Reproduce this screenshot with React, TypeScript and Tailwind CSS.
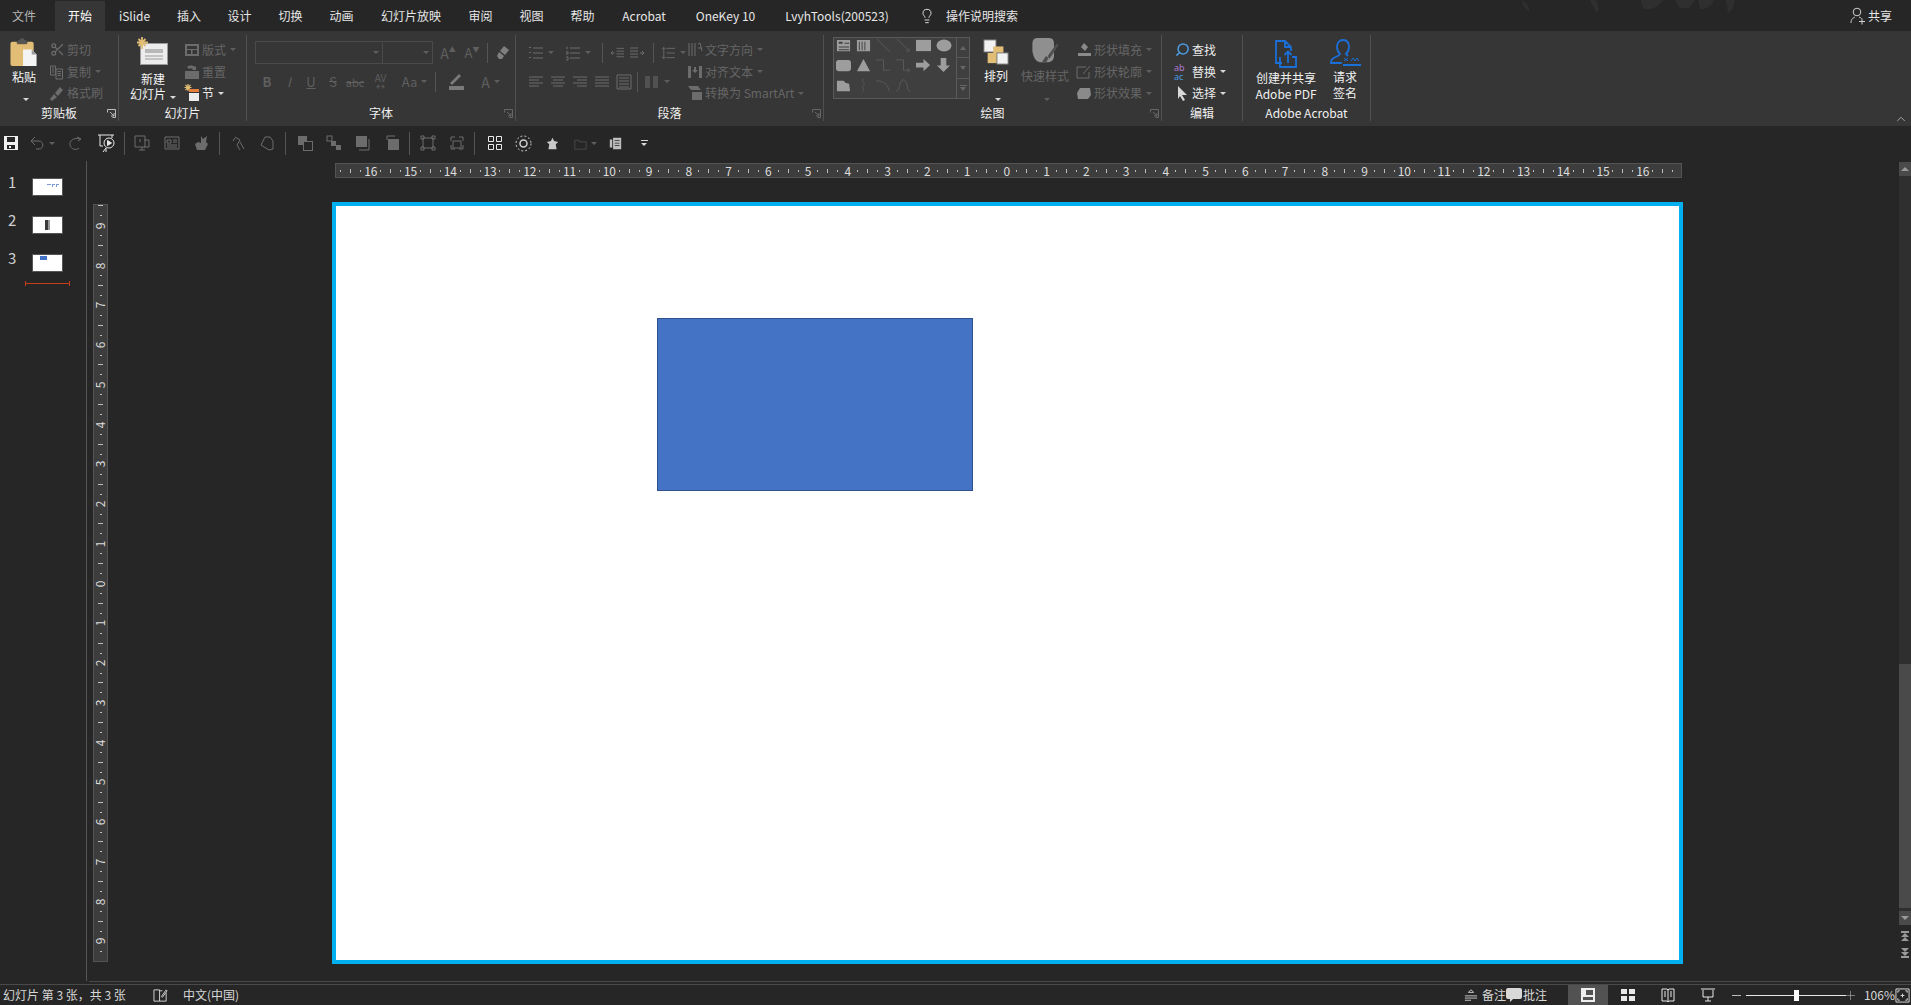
import type { ReactNode } from "react";
import { ChevronUp, Lightbulb, Scissors, Search } from "lucide-react";

const D = "#6c6c6c";

const tabs: [string, number][] = [
  ["开始", 50],
  ["iSlide", 59],
  ["插入", 50],
  ["设计", 51],
  ["切换", 51],
  ["动画", 51],
  ["幻灯片放映", 88],
  ["审阅", 51],
  ["视图", 51],
  ["帮助", 51],
  ["Acrobat", 72],
  ["OneKey 10", 91],
  ["LvyhTools(200523)", 132],
];

const rulerH = Array.from({ length: 135 }, (_, i) => -16.75 + i * 0.25);
const rulerV = Array.from({ length: 76 }, (_, i) => 9.5 - i * 0.25);

function Caret({ off }: { off?: boolean }) {
  return <span className={`ml-[4px] inline-block w-0 h-0 border-x-[3px] border-x-transparent border-t-[3px] ${off ? "border-t-[#5e5e5e]" : "border-t-[#d8d8d8]"}`} />;
}

function Sep({ h = "h-[20px]" }: { h?: string }) {
  return <div className={`w-px ${h} bg-[#555]`} />;
}

function Group({ w, label, launcher, children }: { w: string; label: string; launcher?: boolean; children: ReactNode }) {
  return (
    <div className={`${w} h-[86px] mt-[4px] shrink-0 border-r border-[#505050] flex flex-col`}>
      <div className="flex-1 flex min-h-0">{children}</div>
      <div className="h-[17px] flex items-center justify-center relative text-[#f0f0f0]">
        {label}
        {launcher && (
          <svg className="absolute right-[2px] top-[5px]" width="9" height="9" viewBox="0 0 9 9" fill="none" stroke={label === "剪贴板" ? "#bdbdbd" : "#666"}>
            <path d="M.5 3.5v-3h8v8h-3M3 3l4 4M7 4v3H4" />
          </svg>
        )}
      </div>
    </div>
  );
}

function Cmd({ icon, label, off, caret, w }: { icon: ReactNode; label: string; off?: boolean; caret?: boolean; w?: string }) {
  return (
    <div className={`h-[23px] flex items-center ${w ?? ""} ${off ? "text-[#666]" : "text-[#ececec]"}`}>
      <span className="w-[18px] h-[18px] flex items-center justify-center shrink-0 mr-[1px]">{icon}</span>
      {label}
      {caret && <Caret off={off} />}
    </div>
  );
}

function Ln({ d, s = 16, c = D }: { d: string; s?: number; c?: string }) {
  return (
    <svg width={s} height={s} viewBox="0 0 16 16" fill="none" stroke={c}>
      <path d={d} />
    </svg>
  );
}

function Fl({ d, s = 16, c = D }: { d: string; s?: number; c?: string }) {
  return (
    <svg width={s} height={s} viewBox="0 0 16 16" fill={c}>
      <path d={d} />
    </svg>
  );
}

function FontBtn({ w, children, cls }: { w: string; children: ReactNode; cls?: string }) {
  return <div className={`${w} h-[20px] flex items-center justify-center text-[#5f5f5f] ${cls ?? ""}`}>{children}</div>;
}

function Thumb({ n, children }: { n: number; children: ReactNode }) {
  return (
    <div className="h-[38px] flex items-start">
      <span className="w-[32px] pl-[8px] text-[15px] leading-[20px] text-[#d0d0d0] -mt-[6px]">{n}</span>
      <div className="w-[31px] h-[18px] bg-white border border-[#555] overflow-hidden">{children}</div>
    </div>
  );
}

function Qat({ w, children }: { w: string; children?: ReactNode }) {
  return <div className={`${w} h-[20px] shrink-0 flex items-center justify-center`}>{children}</div>;
}

export default function App() {
  return (
    <div className="w-[1911px] h-[1005px] flex flex-col overflow-hidden bg-[#262626] text-[12px] leading-[16px] text-[#e6e6e6] font-['Noto_Sans_CJK_SC','Noto_Sans',sans-serif]">
      {/* tab row */}
      <div className="h-[31px] shrink-0 flex items-end relative">
        <div className="w-[48px] mr-[7px] h-[30px] flex items-center justify-center text-[#b5b5b5]">文件</div>
        {tabs.map(([t, w]) => (
          <div key={t} style={{ width: w }} className={`h-[30px] flex items-center justify-center ${t === "开始" ? "bg-[#363636] text-white" : ""}`}>
            {t}
          </div>
        ))}
        <div className="h-[30px] flex items-center ml-[16px] w-[27px]">
          <Lightbulb size={16} strokeWidth={1.4} className="text-[#e8e8e8]" />
        </div>
        <div className="h-[30px] flex items-center">操作说明搜索</div>
        <svg className="absolute left-[1520px] top-0 opacity-100" width="260" height="16" viewBox="0 0 260 16" fill="#2f2f2f">
          <path d="M2 0c3 3 8 5 7 11-4-2-7-5-7-11zM70 0c1 3 5 9 7 13 3-4 1-9-1-13zM125 9c6 1 14-2 18-9h-22c0 4 1 7 4 9zM155 0l5 8 9 0 6-8zM180 9c6 1 12-3 14-9h-16zM205 0c3 4 2 9 3 13 4-3 7-8 6-13z" />
        </svg>
        <div className="ml-auto h-[30px] flex items-center pr-[19px]">
          <svg className="mr-[2px]" width="16" height="18" viewBox="0 0 16 18" fill="none" stroke="#d0d0d0">
            <circle cx="7" cy="5" r="3.8" />
            <path d="M1 16c0-4 2-5 4-6M9 10c1 .3 2 .8 2.500 1.500M9 14.500h6M12 11.500v6" />
          </svg>
          共享
        </div>
      </div>

      {/* ribbon */}
      <div className="h-[95px] shrink-0 bg-[#363636] flex relative">
        <Group w="w-[119px]" label="剪贴板" launcher>
          <div className="w-[48px] flex flex-col items-center pt-[3px]">
            <svg width="30" height="30" viewBox="0 0 30 30">
              <rect x="1" y="4" width="24" height="25" rx="2" fill="#e2bd75" />
              <path d="M8 2h2l1-2h4l1 2h2v4H8z" fill="#555" stroke="#2d2d2d" strokeWidth=".5" />
              <path d="M14 12h9l5 5v12H14z" fill="#f4f4f4" />
              <path d="M23 12v5h5z" fill="#999" />
            </svg>
            <span className="mt-[2px] text-[#f4f4f4]">粘贴</span>
            <span className="mt-[3px]"><Caret /></span>
          </div>
          <div className="flex flex-col pt-[4px]">
            <Cmd off label="剪切" icon={<Scissors size={15} color={D} />} />
            <Cmd off caret label="复制" icon={<Ln d="M1.500 2h5v9h-5zM7 5h6.500v10H7zM8.500 7.500h3.500M8.500 9.500h3.500M8.500 11.500h3.500M3 4h2M3 6h2M3 8h2" />} />
            <Cmd off label="格式刷" icon={<Fl d="M1 14l4-5 3 3-5 4zM6 8l5-6 3 3-5 6z" />} />
          </div>
        </Group>

        <Group w="w-[128px]" label="幻灯片">
          <div className="w-[60px] flex flex-col items-center pt-[2px] ml-[4px]">
            <svg width="32" height="28" viewBox="0 0 32 28">
              <rect x="3.500" y="6.500" width="27" height="21" fill="#ececec" stroke="#9a9a9a" />
              <path d="M8 12h18v4H8z" fill="#b8b8b8" />
              <path d="M8 19h18M8 22h18" stroke="#9a9a9a" />
              <path d="M5 0v12M0 5.500h11M1.500 2l7 7M8.500 2l-7 7" stroke="#e2bd75" strokeWidth="1.800" />
            </svg>
            <span className="mt-[6px] text-[#f4f4f4]">新建</span>
            <span className="mt-[-1px] text-[#f4f4f4] whitespace-nowrap">幻灯片<Caret /></span>
          </div>
          <div className="flex flex-col pt-[4px]">
            <Cmd off caret label="版式" icon={<Fl d="M1 2h14v12H1zM3 4v3h10V4zM3 8v4h4V8zM8.500 8v4h4.500V8z" />} />
            <Cmd off label="重置" icon={<Fl d="M1 7h14v8H1zM3 3c2-2 6-2 8 0l1-1v4H8l1-1c-1-1-3-1-4 0z" />} />
            <Cmd
              label="节"
              caret
              icon={
                <svg width="16" height="18" viewBox="0 0 16 18">
                  <path d="M4 0v7M.5 3.500h7M1.500 1l5 5M6.500 1l-5 5" stroke="#e2bd75" strokeWidth="1.200" />
                  <rect x="5" y="5" width="10" height="3" fill="#e67f3b" />
                  <rect x="5" y="9" width="10" height="8" fill="#ececec" />
                </svg>
              }
            />
          </div>
        </Group>

        <Group w="w-[269px]" label="字体" launcher>
          <div className="flex flex-col pl-[8px] pt-[6px]">
            <div className="h-[23px] flex items-center">
              <div className="w-[128px] h-[23px] border border-[#4a4a4a] flex items-center justify-end pr-[3px]"><Caret off /></div>
              <div className="w-[50px] h-[23px] border border-l-0 border-[#4a4a4a] flex items-center justify-end pr-[3px]"><Caret off /></div>
              <FontBtn w="w-[24px] ml-[3px]" cls="text-[14px]">A<sup className="text-[7px]">▲</sup></FontBtn>
              <FontBtn w="w-[24px]" cls="text-[13px]">A<sup className="text-[7px]">▼</sup></FontBtn>
              <span className="mx-[3px]"><Sep /></span>
              <span className="ml-[4px]"><Fl d="M9 1l5 4-4 5-5-4zM4 7l5 4-2 3H4L2 11z" c="#7f7f7f" /></span>
            </div>
            <div className="h-[27px] mt-[4px] flex items-center pl-[1px]">
              <FontBtn w="w-[22px]" cls="font-bold text-[13px]">B</FontBtn>
              <FontBtn w="w-[22px]" cls="italic text-[13px]">I</FontBtn>
              <FontBtn w="w-[22px]" cls="underline text-[13px]">U</FontBtn>
              <FontBtn w="w-[22px]" cls="text-[13px] line-through">S</FontBtn>
              <FontBtn w="w-[22px]" cls="line-through text-[11px]">abc</FontBtn>
              <FontBtn w="w-[29px] leading-[10px] flex-col" cls="text-[10px]">AV<span className="text-[9px] leading-[7px]">↔</span></FontBtn>
              <FontBtn w="w-[35px] pl-[4px]" cls="text-[13px]">Aa<Caret off /></FontBtn>
              <span className="mx-[5px]"><Sep /></span>
              <span className="w-[30px] flex flex-col items-center">
                <svg width="18" height="20" viewBox="0 0 18 20">
                  <path d="M3 11L12 2l2 2-9 9zM2 14h15v4H2z" fill="#7a7a7a" />
                </svg>
              </span>
              <FontBtn w="w-[36px] pl-[3px]" cls="text-[14px]">A<Caret off /></FontBtn>
            </div>
          </div>
        </Group>

        <Group w="w-[308px]" label="段落" launcher>
          <div className="flex flex-col pl-[12px] pt-[6px] w-[170px]">
            <div className="h-[23px] flex items-center">
              <span className="w-[30px] flex items-center"><Ln d="M5 3h10M5 8h10M5 13h10M1 2.500h2M1 7.500h2M1 12.500h2" /><Caret off /></span>
              <span className="w-[38px] ml-[9px] flex items-center"><Ln d="M5 3h10M5 8h10M5 13h10M2 1.500v3M1 7h2v2H1M1 12h2v3H1" /><Caret off /></span>
              <span className="ml-[2px] mr-[7px]"><Sep /></span>
              <Ln d="M7 3h8M7 6h8M7 9h8M7 12h8M1 8h4M3 6L1 8l2 2" />
              <span className="ml-[4px]"><Ln d="M1 3h8M1 6h8M1 9h8M1 12h8M11 8h4M13 6l2 2-2 2" /></span>
              <span className="ml-[8px] mr-[7px]"><Sep /></span>
              <Ln d="M6 3h9M6 8h9M6 13h9M3 2v12M1 4l2-2 2 2M1 12l2 2 2-2" />
              <Caret off />
            </div>
            <div className="h-[27px] mt-[4px] flex items-center">
              <span className="w-[22px]"><Ln d="M1 3h14M1 6h10M1 9h14M1 12h10" /></span>
              <span className="w-[22px]"><Ln d="M1 3h14M3 6h10M1 9h14M3 12h10" /></span>
              <span className="w-[22px]"><Ln d="M1 3h14M5 6h10M1 9h14M5 12h10" /></span>
              <span className="w-[22px]"><Ln d="M1 3h14M1 6h14M1 9h14M1 12h14" /></span>
              <span className="w-[21px]"><Ln d="M1 1h14v14H1zM3 4h10M3 7h10M3 10h10M3 13h10" /></span>
              <Sep />
              <span className="ml-[6px] flex items-center"><Ln d="M1 3h5M1 5h5M1 7h5M1 9h5M1 11h5M1 13h5M9 3h5M9 5h5M9 7h5M9 9h5M9 11h5M9 13h5" /><Caret off /></span>
            </div>
          </div>
          <div className="flex flex-col pt-[4px]">
            <Cmd off caret label="文字方向" icon={<Ln d="M2 1v13M5 1v13M8 1v13M11 2l2-1 2 8M11 6h4" />} />
            <Cmd off caret label="对齐文本" icon={<Fl d="M1 2h3v12H1zM12 2h3v12h-3zM7 3h2v3h2l-3 3-3-3h2z" />} />
            <Cmd off caret label="转换为 SmartArt" icon={<Fl d="M1 1h10l3 4H4zM5 7h10v8H5z" />} />
          </div>
        </Group>

        <Group w="w-[338px]" label="绘图" launcher>
          <div className="ml-[9px] mt-[2px] w-[137px] h-[62px] border border-[#5a5a5a] bg-[#3f3f3f] flex">
            <div className="w-[123px] pl-[2px] grid grid-cols-6 grid-rows-3">
              <Fl s={15} c="#9d9d9d" d="M1 2h14v12H1zM3 4v2h4V4zM9 5v1h5V5zM3 9v1h11V9zM3 12v1h11v-1z" />
              <Fl s={15} c="#9d9d9d" d="M1 2h14v12H1zM3 4v9h1V4zM6 4v9h1V4zM9 4v9h1V4z" />
              <Ln s={15} c="#5a5a5a" d="M1 1l14 14" />
              <Ln s={15} c="#5a5a5a" d="M1 1l13 13M14 11v3h-3" />
              <Fl s={15} c="#9d9d9d" d="M0 2h16v12H0z" />
              <svg width="16" height="15" viewBox="0 0 16 15"><ellipse cx="8" cy="7.500" rx="7.500" ry="6" fill="#9d9d9d" /></svg>
              <Fl s={15} c="#9d9d9d" d="M3 2h10q3 0 3 3v6q0 3-3 3H3q-3 0-3-3V5q0-3 3-3z" />
              <Fl s={15} c="#9d9d9d" d="M8 1l7 13H1z" />
              <Ln s={15} c="#5a5a5a" d="M0 2h8v11h7" />
              <Ln s={15} c="#5a5a5a" d="M0 2h8v11h7M12 11l3 2-3 2" />
              <Fl s={15} c="#9d9d9d" d="M0 5h8V1l7 6.500L8 14v-4H0z" />
              <Fl s={15} c="#9d9d9d" d="M5 0h6v8h4l-7 7-7-7h4z" />
              <Fl s={15} c="#9d9d9d" d="M1 3h7l2 2 4 1 1 8H1z" />
              <Ln s={15} c="#5a5a5a" d="M8 1c-3 3 3 4 0 7s3 4-1 6" />
              <Ln s={15} c="#5a5a5a" d="M0 3c8 0 13 4 14 11" />
              <Ln s={15} c="#5a5a5a" d="M0 14c5 0 3-12 8-12s3 12 7 12" />
            </div>
            <div className="w-[13px] border-l border-[#5a5a5a] flex flex-col">
              <div className="flex-1 flex items-center justify-center"><span className="w-0 h-0 border-x-[3px] border-x-transparent border-b-[4px] border-b-[#666]" /></div>
              <div className="flex-1 border-y border-[#5a5a5a] flex items-center justify-center"><span className="w-0 h-0 border-x-[3px] border-x-transparent border-t-[4px] border-t-[#666]" /></div>
              <div className="flex-1 flex flex-col items-center justify-center"><span className="w-[7px] h-px bg-[#666] mb-px" /><span className="w-0 h-0 border-x-[3px] border-x-transparent border-t-[4px] border-t-[#666]" /></div>
            </div>
          </div>
          <div className="w-[50px] ml-[1px] flex flex-col items-center pt-[4px]">
            <svg width="28" height="28" viewBox="0 0 28 28">
              <rect x="1" y="1" width="13" height="13" fill="#f2f2f2" stroke="#777" />
              <rect x="11" y="8" width="11" height="11" fill="#e2bd75" />
              <rect x="5" y="15" width="10" height="11" fill="#e2bd75" />
              <rect x="15" y="15" width="12" height="12" fill="#f2f2f2" stroke="#777" />
            </svg>
            <span className="mt-[3px] text-[#f4f4f4]">排列</span>
            <span className="mt-[4px]"><Caret /></span>
          </div>
          <div className="w-[48px] ml-[0px] mr-[6px] flex flex-col items-center pt-[3px] text-[#666] whitespace-nowrap">
            <svg width="30" height="30" viewBox="0 0 30 30">
              <path d="M1 6q0-6 6-6h12q6 0 6 6v14q0 6-6 7H9Q3 26 1 15z" fill="#8f8f8f" />
              <path d="M12 26l4-6 3 2-3 6zM18 20l10-14 2 2-10 15z" fill="#4f4f4f" />
            </svg>
            <span className="mt-[3px]">快速样式</span>
            <span className="mt-[4px]"><Caret off /></span>
          </div>
          <div className="flex flex-col pt-[4px]">
            <Cmd off caret label="形状填充" icon={<Fl d="M2 11h13v3H2zM8 1l4 4-3 4-4-4z" c="#8a8a8a" />} />
            <Cmd off caret label="形状轮廓" icon={<Ln d="M1 3h9M1 3v11h12V8M7 10l7-8" />} />
            <Cmd off caret label="形状效果" icon={<Fl d="M4 3h10l1 7-3 4H2L1 8z" c="#8a8a8a" />} />
          </div>
        </Group>

        <Group w="w-[81px]" label="编辑">
          <div className="flex flex-col pt-[4px] pl-[11px]">
            <Cmd label="查找" icon={<Search size={15} strokeWidth={2.4} color="#4a9be0" className="-scale-x-100" />} />
            <Cmd
              label="替换"
              caret
              icon={
                <svg width="18" height="18" viewBox="0 0 18 18" fontSize="9" fontFamily="Noto Sans">
                  <text x="1" y="8" fill="#b07ad0">ab</text>
                  <text x="1" y="17" fill="#4a9be0">ac</text>
                </svg>
              }
            />
            <Cmd label="选择" caret icon={<Fl d="M4 1l9 9H8l3 5-2 1-3-5-2 3z" c="#d8d8d8" />} />
          </div>
        </Group>

        <Group w="w-[128px]" label="Adobe Acrobat">
          <div className="w-[86px] flex flex-col items-center pt-[5px]">
            <svg width="24" height="28" viewBox="0 0 24 28" fill="none" stroke="#1b6fd8" strokeWidth="1.800">
              <path d="M8 23H2V1h9l6 6v4M11 1v6h6M6 17v10h16V17h-4M14 23V12M10.500 15l3.500-3.500 3.500 3.500" />
            </svg>
            <span className="mt-[2px] text-[#f0f0f0]">创建并共享</span>
            <span className="text-[#f0f0f0]">Adobe PDF</span>
          </div>
          <div className="w-[32px] flex flex-col items-center pt-[4px]">
            <svg width="32" height="29" viewBox="0 0 32 29" fill="none" stroke="#1b6fd8" strokeWidth="1.800">
              <path d="M14 1c-4 0-6 3-6 7 0 3 1 5 3 7-1 3-9 3-9 8v1h11M14 1c4 0 6 3 6 7 0 3-1 5-3 7l2 2M14 26h18" />
              <path d="M15 22l4-3M15 19l4 3M22 22l2-3 2 3 2-3 2 3" strokeWidth="1" />
            </svg>
            <span className="mt-[1px] text-[#f0f0f0]">请求</span>
            <span className="text-[#f0f0f0]">签名</span>
          </div>
        </Group>

        <ChevronUp size={14} strokeWidth={1.2} className="absolute right-[3px] bottom-0 text-[#cfcfcf]" />
      </div>

      {/* quick access */}
      <div className="h-[34px] shrink-0 flex items-center">
        <Qat w="w-[22px]"><Fl c="#f0f0f0" d="M1 1h14v14H1zM4 2v5h8V2zM4 10v4h8v-4zM6 11h2v2H6z" /></Qat>
        <Qat w="w-[32px] ml-[4px]"><Ln d="M6 2L2 6l4 4M2 6h8c5 0 5 8 0 8H7" /><Caret off /></Qat>
        <Qat w="w-[24px] ml-[5px]"><Ln d="M10 2l4 2-3 2M13 4C7 2 2 6 3 10s6 6 9 3" /></Qat>
        <Qat w="w-[24px] ml-[7px]">
          <svg width="18" height="20" viewBox="0 0 18 20" fill="none" stroke="#e8e8e8">
            <path d="M1 2h16M3 2v11h3M15 2v3M9 15l-3 4M9 15v4" />
            <circle cx="12" cy="10" r="5" />
            <path d="M10.500 7.500v5l4-2.500z" fill="#e8e8e8" />
          </svg>
        </Qat>
        <Qat w="w-px ml-[6px]"><Sep h="h-[23px]" /></Qat>
        <Qat w="w-[30px] ml-[2px]"><Ln d="M1 1h10v11H1zM10 5h5v7h-5M8 12v3M5 15h6M6 4v3" /></Qat>
        <Qat w="w-[30px]"><Ln d="M1 2h14v12H1zM3 5h4v3H3zM9 5h4M9 7h4M3 10h10M3 12h10" /></Qat>
        <Qat w="w-[28px]"><Fl d="M8 1l2 3 4-3-1 6 2 2-3 6H4L2 9l3-2 3 1z" /></Qat>
        <Qat w="w-px ml-[4px]"><Sep h="h-[23px]" /></Qat>
        <Qat w="w-[30px] ml-[3px]"><Ln d="M5 2l5 3-3 5 3 5M3 6l2-3M10 7l4 7" /></Qat>
        <Qat w="w-[28px]"><Ln d="M6 2h5l3 4v8l-4 1-8-5z" /></Qat>
        <Qat w="w-px ml-[4px]"><Sep h="h-[23px]" /></Qat>
        <Qat w="w-[29px] ml-[4px]"><svg width="16" height="16"><rect x="1" y="1" width="9" height="9" fill={D} /><rect x="6.500" y="6.500" width="9" height="9" fill="#262626" stroke={D} /></svg></Qat>
        <Qat w="w-[29px]"><svg width="16" height="16" fill={D}><rect x="1" y="1" width="5" height="5" fill="none" stroke={D} /><rect x="5" y="6" width="5" height="5" /><rect x="10" y="10" width="5" height="5" /></svg></Qat>
        <Qat w="w-[29px]"><svg width="16" height="16"><rect x="1" y="1" width="11" height="11" fill={D} /><path d="M14 4v11H4" fill="none" stroke={D} /></svg></Qat>
        <Qat w="w-[29px]"><svg width="16" height="16"><path d="M3 5V1h8" fill="none" stroke={D} /><rect x="4" y="4" width="11" height="11" fill={D} /></svg></Qat>
        <Qat w="w-px ml-[3px]"><Sep h="h-[23px]" /></Qat>
        <Qat w="w-[29px] ml-[3px]"><Ln d="M3 3h10v10H3zM1 1h3v3H1zM12 1h3v3h-3zM1 12h3v3H1zM12 12h3v3h-3z" /></Qat>
        <Qat w="w-[29px]"><Ln d="M4 6h8v7H4zM2 2h4M10 2h4M2 2v4M14 2v4M2 10v4h4M14 10v4h-4" /></Qat>
        <Qat w="w-px ml-[3px]"><Sep h="h-[23px]" /></Qat>
        <Qat w="w-[29px] ml-[5px]"><Ln c="#e8e8e8" d="M1.500 1.500h5v5h-5zM9.500 1.500h5v5h-5zM1.500 9.500h5v5h-5zM9.500 9.500h5v5h-5z" /></Qat>
        <Qat w="w-[29px]"><svg width="17" height="17" fill="none" stroke="#d0d0d0"><circle cx="8.500" cy="8.500" r="7.500" strokeDasharray="2 2" /><circle cx="8.500" cy="8.500" r="3.500" strokeWidth="1.500" /></svg></Qat>
        <Qat w="w-[29px]"><Fl s={13} c="#c8c8c8" d="M8 1l2 4 5 1-3 3 1 6H3l1-6-3-3 5-1z" /></Qat>
        <Qat w="w-[37px]"><Ln s={13} c="#4f4f4f" d="M1 4h5l1 2h8v9H1z" /><Caret off /></Qat>
        <Qat w="w-[22px]"><Fl s={13} c="#bdbdbd" d="M1 3h3v10H1zM5 1h10v14H5zM7 4v1h6V4zM7 7v1h6V7zM7 10v1h6v-1z" /></Qat>
        <Qat w="w-[36px] flex-col">
          <span className="w-[7px] h-px bg-[#d8d8d8] mb-[2px]" />
          <span className="w-0 h-0 border-x-[3px] border-x-transparent border-t-[3px] border-t-[#d8d8d8]" />
        </Qat>
      </div>

      {/* workspace */}
      <div className="flex-1 min-h-0 flex">
        <div className="w-[87px] shrink-0 border-r border-[#555] mt-px pt-[17px] pl-[0px] relative">
          <Thumb n={1}>
            <div className="flex justify-end gap-[1px] pr-[3px] pt-[5px]">
              <span className="w-[4px] h-px bg-[#7a9ad8]" />
              <span className="w-[3px] h-[3px] border-t border-l border-[#7a9ad8]" />
              <span className="w-[3px] h-[3px] border-t border-l border-[#7a9ad8]" />
            </div>
          </Thumb>
          <Thumb n={2}>
            <div className="ml-[12px] mt-[3px] w-[5px] h-[10px] bg-[#3a3a3a] border-r-2 border-[#9a9a9a]" />
          </Thumb>
          <Thumb n={3}>
            <div className="ml-[7px] mt-[1px] w-[7px] h-[4px] bg-[#4472c4]" />
          </Thumb>
          <div className="ml-[25px] mt-[-11px] w-[45px] h-[5px] border-x border-[#c43e1c] flex items-center">
            <div className="w-full h-px bg-[#c43e1c]" />
          </div>
        </div>

        <div className="flex-1 min-w-0 flex flex-col pt-[3px]">
          {/* horizontal ruler */}
          <div className="ml-[248px] w-[1347px] h-[15px] bg-[#3d3d3d] border border-[#545454] flex items-center overflow-hidden shrink-0">
            {rulerH.map((v) => (
              <div key={v} className="w-[9.95px] h-full shrink-0 flex items-center justify-center overflow-visible">
                {Number.isInteger(v) ? (
                  <span className="text-[#dedede] text-[12px] leading-none">{Math.abs(v)}</span>
                ) : Number.isInteger(v * 2) ? (
                  <span className="w-px h-[4px] bg-[#bdbdbd]" />
                ) : (
                  <span className="w-px h-[2px] bg-[#bdbdbd]" />
                )}
              </div>
            ))}
          </div>

          <div className="flex ml-[6px] mt-[24px] items-start">
            {/* vertical ruler */}
            <div className="w-[15px] h-[758px] mt-[2px] shrink-0 bg-[#3d3d3d] border border-[#545454] flex flex-col items-center overflow-hidden">
              <div className="shrink-0 -mt-[4px]">
                {rulerV.map((v) => (
                  <div key={v} className="h-[9.945px] w-[13px] flex items-center justify-center">
                    {Number.isInteger(v) ? (
                      <span className="text-[#dedede] text-[12px] leading-none -rotate-90">{Math.abs(v)}</span>
                    ) : Number.isInteger(v * 2) ? (
                      <span className="w-[5px] h-px bg-[#bdbdbd]" />
                    ) : (
                      <span className="w-[2px] h-px bg-[#bdbdbd]" />
                    )}
                  </div>
                ))}
              </div>
            </div>

            {/* slide */}
            <div className="ml-[224px] w-[1351px] h-[762px] shrink-0 bg-white border-[4px] border-[#00b0f0]">
              <div className="ml-[321px] mt-[112px] w-[316px] h-[173px] bg-[#4472c4] border border-[#2f528f]" />
            </div>
          </div>
        </div>

        {/* scroll bar */}
        <div className="w-[12px] shrink-0 flex flex-col pt-[2px]">
          <div className="h-[763px] bg-[#2f2f2f] flex flex-col">
            <div className="h-[14px] bg-[#4a4a4a] flex items-center justify-center"><span className="w-0 h-0 border-x-[4px] border-x-transparent border-b-[4px] border-b-[#999]" /></div>
            <div className="flex-1" />
            <div className="h-[244px] bg-[#4a4a4a] mb-[3px]" />
            <div className="h-[14px] bg-[#4a4a4a] flex items-center justify-center"><span className="w-0 h-0 border-x-[4px] border-x-transparent border-t-[4px] border-t-[#999]" /></div>
          </div>
          <div className="mt-[6px] flex flex-col items-center">
            <span className="w-[8px] h-[2px] bg-[#999]" />
            <span className="w-0 h-0 border-x-[4px] border-x-transparent border-b-[4px] border-b-[#999]" />
            <span className="w-0 h-0 border-x-[4px] border-x-transparent border-b-[4px] border-b-[#999]" />
          </div>
          <div className="mt-[7px] flex flex-col items-center">
            <span className="w-0 h-0 border-x-[4px] border-x-transparent border-t-[4px] border-t-[#999]" />
            <span className="w-0 h-0 border-x-[4px] border-x-transparent border-t-[4px] border-t-[#999]" />
            <span className="w-[8px] h-[2px] bg-[#999]" />
          </div>
        </div>
      </div>

      {/* status */}
      <div className="ml-[89px] h-px bg-[#4a4a4a] shrink-0" />
      <div className="h-[3px] shrink-0 border-b border-[#4a4a4a]" />
      <div className="h-[20px] shrink-0 flex items-center text-[#d8d8d8]">
        <span className="ml-[3px] w-[150px] whitespace-nowrap">幻灯片 第 3 张，共 3 张</span>
        <Ln s={15} c="#d8d8d8" d="M1 2h6v12H1zM7 3h3M14 5v9H7M9 9l5-7 1 1-5 7z" />
        <span className="ml-[15px]">中文(中国)</span>
        <div className="ml-auto h-full flex items-center">
          <Ln s={14} c="#d8d8d8" d="M1 9h14M1 11.500h14M1 14h7M5 5l3-3 3 3z" />
          <span className="ml-[4px]">备注</span>
          <Fl c="#d8d8d8" d="M2 1h12q2 0 2 2v7q0 2-2 2H7l-3 3v-3H2q-2 0-2-2V3q0-2 2-2z" />
          <span className="ml-px mr-[21px]">批注</span>
          <div className="w-[40px] h-full bg-[#525252] flex items-center justify-center"><Fl c="#eee" d="M1 1h14v14H1zM6 3v5h7V3zM3 10v3h10v-3z" /></div>
          <div className="w-[40px] flex justify-center"><Fl c="#e8e8e8" d="M1 2h6v5H1zM9 2h6v5H9zM1 9h6v5H1zM9 9h6v5H9z" /></div>
          <div className="w-[40px] flex justify-center"><Ln c="#e8e8e8" d="M2 2h5l1 1 1-1h5v12H9l-1 1-1-1H2zM8 3v11M4 5h2M4 7h2M4 9h2M10 5h2M10 7h2M10 9h2" /></div>
          <div className="w-[40px] flex justify-center"><Ln c="#e8e8e8" d="M1 2h14M3 3v7h10V3M8 10v4M5 14h6" /></div>
          <div className="w-[125px] ml-[4px] flex items-center relative">
            <span className="w-[9px] h-px bg-[#bbb]" />
            <span className="ml-[5px] w-[100px] h-px bg-[#e8e8e8]" />
            <span className="absolute left-[62px] w-[5px] h-[11px] bg-white" />
            <Ln s={9} c="#bbb" d="M8 0v16M0 8h16" />
          </div>
          <span className="ml-[7px]">106%</span>
          <Ln s={15} c="#e0e0e0" d="M1 1h14v14H1zM3 5V3h2M11 3h2v2M3 11v2h2M11 13h2v-2M8 6v4M6 8h4" />
          <span className="w-px" />
        </div>
      </div>
    </div>
  );
}
